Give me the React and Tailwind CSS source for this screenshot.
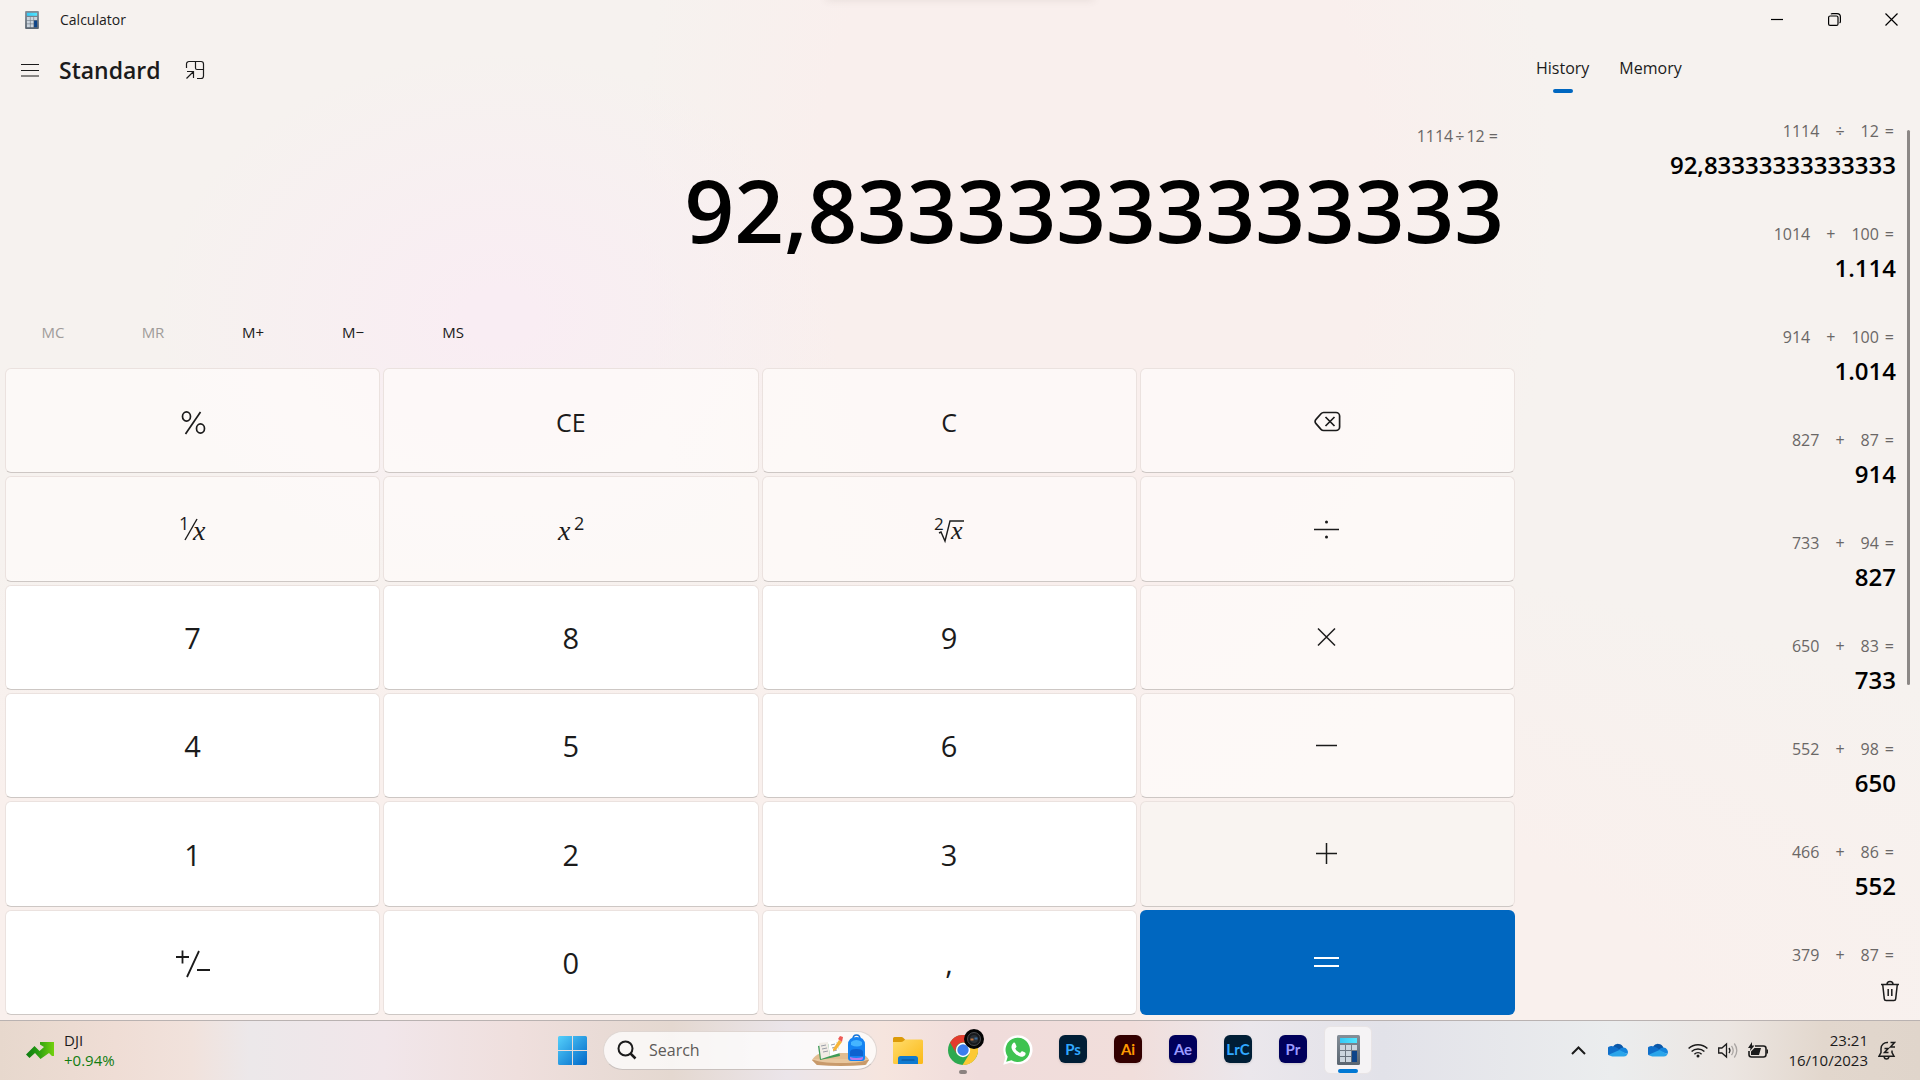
import React from "react";

const history = [
  ["1114", "÷", "12", "92,83333333333333"],
  ["1014", "+", "100", "1.114"],
  ["914", "+", "100", "1.014"],
  ["827", "+", "87", "914"],
  ["733", "+", "94", "827"],
  ["650", "+", "83", "733"],
  ["552", "+", "98", "650"],
  ["466", "+", "86", "552"],
  ["379", "+", "87", null],
];

/* ---------- key glyphs ---------- */

const glyph = { width: 32, height: 32, viewBox: "0 0 32 32", fill: "none", stroke: "currentColor", strokeWidth: 1.5, className: "overflow-visible", "aria-hidden": true };

const Percent = () => (
  <svg {...glyph} strokeWidth="1.7">
    <ellipse cx="9.500" cy="11.500" rx="4" ry="4.6" />
    <ellipse cx="23.500" cy="23.500" rx="4" ry="4.6" />
    <path d="M23.500 7 8.500 29" />
  </svg>
);
const Reciprocal = () => (
  <svg {...glyph}>
    <text x="2" y="17" fontSize="18" stroke="none" fill="currentColor" className="font-['Open_Sans',sans-serif]">1</text>
    <path d="M20 6 8 27" strokeWidth="1.4" />
    <text x="16" y="27" fontSize="28" fontStyle="italic" stroke="none" fill="currentColor" className="font-['Liberation_Serif',serif]">x</text>
  </svg>
);
const Square = () => (
  <svg {...glyph}>
    <text x="3" y="27" fontSize="28" fontStyle="italic" stroke="none" fill="currentColor" className="font-['Liberation_Serif',serif]">x</text>
    <text x="19" y="17" fontSize="18" stroke="none" fill="currentColor" className="font-['Open_Sans',sans-serif]">2</text>
  </svg>
);
const Root = () => (
  <svg {...glyph}>
    <text x="1" y="17" fontSize="17" stroke="none" fill="currentColor" className="font-['Open_Sans',sans-serif]">2</text>
    <path d="m6 20 2-1 4 9 5-20h14" strokeWidth="1.4" />
    <text x="18" y="26" fontSize="26" fontStyle="italic" stroke="none" fill="currentColor" className="font-['Liberation_Serif',serif]">x</text>
  </svg>
);
const Backspace = () => (
  <svg {...glyph} strokeWidth="1.7">
    <path d="M12.600 7.500h12.400a3.600 3.600 0 0 1 3.600 3.600v10.800a3.600 3.600 0 0 1-3.600 3.600H12.600a3.600 3.600 0 0 1-2.600-1.100L5 18.700a3 3 0 0 1 0-4.300l5-5.700a3.600 3.600 0 0 1 2.600-1.200Z" />
    <path d="m14.500 12 9 9m0-9-9 9" />
  </svg>
);
const Divide = () => (
  <svg {...glyph}>
    <path d="M3 16.500h25" />
    <circle cx="15.500" cy="9" r="1.500" fill="currentColor" stroke="none" />
    <circle cx="15.500" cy="24" r="1.500" fill="currentColor" stroke="none" />
  </svg>
);
const Times = () => <svg {...glyph}><path d="m7 7.500 17 17m0-17-17 17" /></svg>;
const Minus = () => <svg {...glyph}><path d="M5 15.500h21" /></svg>;
const Plus = () => <svg {...glyph}><path d="M5 15.500h21M15.500 5v21" /></svg>;
const Equals = () => <svg {...glyph} strokeWidth="2"><path d="M3 12h25M3 20h25" /></svg>;
const Negate = () => (
  <svg {...glyph} width="36" viewBox="0 0 36 32" strokeWidth="1.8">
    <path d="M1 10h13M7.500 3.500v13M24 4 12 30M22 23h13" />
  </svg>
);

const keys = [
  ["Percent", <Percent />, "op"],
  ["Clear entry", "CE", "fn"],
  ["Clear", "C", "fn"],
  ["Backspace", <Backspace />, "op"],
  ["Reciprocal", <Reciprocal />, "op"],
  ["Square", <Square />, "op"],
  ["Square root", <Root />, "op"],
  ["Divide by", <Divide />, "op"],
  ["Seven", "7", "num"],
  ["Eight", "8", "num"],
  ["Nine", "9", "num"],
  ["Multiply by", <Times />, "op"],
  ["Four", "4", "num"],
  ["Five", "5", "num"],
  ["Six", "6", "num"],
  ["Minus", <Minus />, "op"],
  ["One", "1", "num"],
  ["Two", "2", "num"],
  ["Three", "3", "num"],
  ["Plus", <Plus />, "plus"],
  ["Positive negative", <Negate />, "num"],
  ["Zero", "0", "num"],
  ["Decimal separator", ",", "num"],
  ["Equals", <Equals />, "eq"],
];

const keyStyle = {
  op: "border border-[#ebe2df] border-b-[#cdc7c4] bg-[#fffcfb]/70",
  fn: "border border-[#ebe2df] border-b-[#cdc7c4] bg-[#fffcfb]/70 pt-1 text-[25px]",
  plus: "border border-[#ebe2df] border-b-[#cdc7c4] bg-[#f9f4f1]",
  num: "border border-[#ebe2df] border-b-[#cdc7c4] bg-white pt-px text-[29px]",
  eq: "bg-[#0067c0] text-white",
};

/* ---------- window ---------- */

const CalcIcon = ({ className }) => (
  <svg className={className} viewBox="0 0 23 30" aria-hidden="true">
    <defs>
      <linearGradient id="calcBody" x1="0" y1="0" x2="0" y2="1">
        <stop stopColor="#848e98" />
        <stop offset="1" stopColor="#5a6570" />
      </linearGradient>
      <linearGradient id="calcScreen" x1="0" y1="0" x2="1" y2="0">
        <stop stopColor="#35c8f5" />
        <stop offset="1" stopColor="#50e6ff" />
      </linearGradient>
    </defs>
    <rect width="23" height="30" rx="1.500" fill="url(#calcBody)" />
    <rect x="3" y="3" width="17" height="5" fill="url(#calcScreen)" />
    <g fill="#cbd5de">
      <rect x="3" y="10" width="5" height="5" />
      <rect x="9" y="10" width="5" height="5" />
      <rect x="15" y="10" width="5" height="5" />
      <rect x="3" y="16" width="5" height="5" />
      <rect x="9" y="16" width="5" height="5" />
      <rect x="3" y="22" width="5" height="5" />
      <rect x="9" y="22" width="5" height="5" />
    </g>
    <rect x="15" y="16" width="5" height="11" fill="#0d4489" />
  </svg>
);

function TitleBar() {
  return (
    <header className="flex h-10 shrink-0 items-center justify-between">
      <div className="flex items-center pl-6">
        <CalcIcon className="h-[18px] w-4" />
        <h1 className="pl-5 text-sm text-[#1b1b1b]">Calculator</h1>
      </div>
      <div className="flex h-[38px] self-start pr-px text-black">
        <button aria-label="Minimize" className="flex w-14 items-center justify-center">
          <svg width="12" height="12" stroke="currentColor"><path d="M0 6.500h12" strokeWidth="1.200" /></svg>
        </button>
        <button aria-label="Restore" className="flex w-[58px] items-center justify-center">
          <svg width="13" height="13" fill="none" stroke="currentColor" strokeWidth="1.200">
            <rect x=".6" y="3" width="9.400" height="9.400" rx="1.500" />
            <path d="M3 1.300Q3.400.6 4.500.6H9a3.400 3.400 0 0 1 3.400 3.400v4.500q0 1-.8 1.500" />
          </svg>
        </button>
        <button aria-label="Close" className="flex w-14 items-center justify-center">
          <svg width="13" height="13" stroke="currentColor" strokeWidth="1.200"><path d="m.5.500 12 12m0-12-12 12" /></svg>
        </button>
      </div>
    </header>
  );
}

function Keypad() {
  return (
    <section className="flex min-w-0 flex-1 flex-col">
      <div className="flex h-[60px] items-center pl-5 text-[#1b1b1b]">
        <button aria-label="Open navigation">
          <svg width="20" height="14" stroke="currentColor" strokeWidth="1.200"><path d="M1 1.500h18M1 7.500h18M1 13h18" /></svg>
        </button>
        <h2 className="pl-[19px] text-[23px] font-semibold">Standard</h2>
        <button aria-label="Keep on top" className="ml-6">
          <svg width="20" height="20" fill="none" stroke="currentColor" strokeWidth="1.200">
            <path d="M1.500 8V4a2.500 2.500 0 0 1 2.500-2.500h12A2.500 2.500 0 0 1 18.500 4v12a2.500 2.500 0 0 1-2.500 2.500h-4M10.500 1.500V8a1.500 1.500 0 0 0 1.500 1.500h6.500M1.500 18.500 8.500 11.500M2 11.500h6.500V18" />
          </svg>
        </button>
      </div>
      <div className="flex justify-end gap-[2px] pt-6 pr-[17px] leading-6 text-[#6a6766]">
        <span>1114</span>
        <span>÷</span>
        <span>12 =</span>
      </div>
      <output className="block h-[156px] pr-[11px] text-right text-[87px] leading-[122px] font-semibold text-black">92,83333333333333</output>
      <div className="flex h-14 items-center pl-[3px] text-[15px] text-[#1b1b1b]">
        <button disabled className="w-[100px] text-[#a09c9a]">MC</button>
        <button disabled className="w-[100px] text-[#a09c9a]">MR</button>
        <button className="w-[100px]">M+</button>
        <button className="w-[100px]">M−</button>
        <button className="w-[100px]">MS</button>
      </div>
      <div className="mt-2 mb-[5px] ml-[5px] grid flex-1 auto-rows-fr grid-cols-4 gap-[3px]">
        {keys.map(([label, face, kind]) => (
          <button key={label} aria-label={label} className={`flex items-center justify-center rounded-md text-[#1b1b1b] ${keyStyle[kind]}`}>
            {face}
          </button>
        ))}
      </div>
    </section>
  );
}

function HistoryPane() {
  return (
    <aside className="flex w-[405px] shrink-0 flex-col pl-[5px]">
      <div role="tablist" className="flex h-[60px] gap-[30px] pt-4 pl-4 leading-6 text-[#1b1b1b]">
        <button role="tab" aria-selected="true" className="flex flex-col items-center gap-[9px]">
          History
          <span className="h-1 w-5 rounded-full bg-[#0067c0]" />
        </button>
        <button role="tab" aria-selected="false" className="self-start">Memory</button>
      </div>
      <div className="flex min-h-0 flex-1 pt-[19px]">
        <ul className="h-0 min-h-full flex-1 overflow-hidden">
          {history.map(([a, op, b, result]) => (
            <li key={a} className="text-right">
              <div className="flex justify-end pr-[10px] leading-6 text-[#6a6766]">
                <span>{a}</span>
                <span className="px-4">{op}</span>
                <span>{b}</span>
                <span className="pl-[6px]">=</span>
              </div>
              {result && <div className="pt-[6px] pr-2 pb-[41px] text-2xl leading-8 font-semibold text-black">{result}</div>}
            </li>
          ))}
        </ul>
        <div className="mt-[11px] mr-[10px] ml-[3px] h-[555px] w-[3px] rounded-full bg-[#8c8886]" />
      </div>
      <div className="flex h-[58px] items-center justify-end pr-5">
        <button aria-label="Clear all history">
          <svg width="20" height="22" fill="none" stroke="#1b1b1b" strokeWidth="1.500">
            <path d="M1 4.500h18M7 4.500a3 3 0 0 1 6 0M2.700 4.500l1.600 14.300a1.800 1.800 0 0 0 1.800 1.600h7.800a1.800 1.800 0 0 0 1.800-1.600l1.600-14.300M8.200 9v7M11.800 9v7" />
          </svg>
        </button>
      </div>
    </aside>
  );
}

/* ---------- taskbar ---------- */

const adobe = [
  ["Ps", "bg-[#001e36] text-[#31a8ff]"],
  ["Ai", "bg-[#330000] text-[#ff9a00]"],
  ["Ae", "bg-[#00005b] text-[#9999ff]"],
  ["LrC", "bg-[#001e36] text-[#31a8ff]"],
  ["Pr", "bg-[#00005b] text-[#9999ff]"],
];

const WinLogo = () => (
  <svg width="29" height="29" viewBox="0 0 29 29" aria-hidden="true">
    <defs>
      <linearGradient id="win" gradientUnits="userSpaceOnUse" x1="0" y1="0" x2="29" y2="29">
        <stop stopColor="#55d0fb" />
        <stop offset="1" stopColor="#0067c8" />
      </linearGradient>
    </defs>
    <path fill="url(#win)" d="M1.500 0H14v14H0V1.500A1.500 1.500 0 0 1 1.500 0ZM15 0h12.500A1.500 1.500 0 0 1 29 1.500V14H15ZM0 15h14v14H1.500A1.500 1.500 0 0 1 0 27.500ZM15 15h14v12.500a1.500 1.500 0 0 1-1.500 1.500H15Z" />
  </svg>
);

const SchoolArt = () => (
  <svg width="57" height="32" viewBox="0 0 57 32" aria-hidden="true">
    <path d="M0 26q3-5 9-7h40q6 3 8 7l-3 5H5Z" fill="#e2bd91" />
    <path d="M0 26h57l-4 5q-24 2-48 0Z" fill="#c89a6b" />
    <path d="M0 25h57q-6 4-28 4T0 25Z" fill="#e8c79e" />
    <path d="m6 12 19-4 3 14-20 4Z" fill="#3f9b57" />
    <path d="m7 9 9-1 2 14-9 3Z" fill="#f1ece6" />
    <path d="m16 8 8-2 4 13-10 3Z" fill="#fff" />
    <path d="m9 12 5-1m-4 4 5-1m-4 4 5-1m3-6 4-1m-3 4 4-1m-3 4 4-1" stroke="#9a9ea8" />
    <path d="m21 15 6-9 3 2-6 8-3 1Z" fill="#f7b53a" />
    <path d="m26 5 2-3 3 1-1 5Z" fill="#ee5a55" />
    <path d="M41 5q0-4 3.500-4T48 5" fill="none" stroke="#1473d8" strokeWidth="1.500" />
    <path d="M36 11q0-8 8.500-8T53 11v13q0 3-3 3H39q-3 0-3-3Z" fill="#1583f2" />
    <path d="M39 8q5-4 11 0v3q-5 3-11 0Z" fill="#45b5ff" />
    <path d="M38 18q0-3 6.500-3t6.500 3v4H38Z" fill="#0d62cf" />
    <path d="M38 23q6 2 13 0v1q0 2-2 2h-9q-2 0-2-2Z" fill="#b779ee" />
  </svg>
);

const Folder = () => (
  <svg width="30" height="27" viewBox="0 0 30 27" aria-hidden="true">
    <defs>
      <linearGradient id="fold" x1="0" y1="0" x2="1" y2="1">
        <stop stopColor="#ffdc6c" />
        <stop offset="1" stopColor="#fbb916" />
      </linearGradient>
    </defs>
    <path d="M0 1.500A1.500 1.500 0 0 1 1.500 0h7q1 0 1.700.7L13 3.500 10 7H0Z" fill="#dc9a08" />
    <path d="M0 5h8q1.500 0 2.500-1l.8-.8q.7-.7 1.700-.7h15.500A1.500 1.500 0 0 1 30 4v21.500a1.500 1.500 0 0 1-1.500 1.500h-27A1.500 1.500 0 0 1 0 25.500Z" fill="url(#fold)" />
    <path d="M5 27v-5.500A2.500 2.500 0 0 1 7.500 19h15a2.500 2.500 0 0 1 2.500 2.500V27Z" fill="#0f7ad0" />
    <path d="M9 23h12" stroke="#0a4f90" strokeWidth="1.200" strokeLinecap="round" />
  </svg>
);

const Chrome = () => (
  <svg width="30" height="30" viewBox="0 0 30 30" aria-hidden="true">
    <circle cx="15" cy="15" r="15" fill="#2da94f" />
    <path d="M15 7.500h13A15 15 0 0 1 14.500 30l7-11.200Z" fill="#fcc934" />
    <path d="M2 7.500A15 15 0 0 1 28 7.500H15a7.500 7.500 0 0 0-6.500 11.200Z" fill="#e33b2e" />
    <circle cx="15" cy="15" r="7.200" fill="#fff" />
    <circle cx="15" cy="15" r="5.700" fill="#3b7ded" />
  </svg>
);

const Lens = () => (
  <svg width="20" height="20" viewBox="0 0 20 20" aria-hidden="true">
    <circle cx="10" cy="10" r="10" fill="#050505" />
    <circle cx="10" cy="10" r="6.500" fill="#17191c" stroke="#5a5d60" strokeWidth=".8" />
    <circle cx="10" cy="10" r="4" fill="#2a3036" />
    <path d="M6.500 9.500h3v2h-3Z" fill="#c6763e" />
    <path d="M10.500 8.500h3v2h-3Z" fill="#3c6da0" />
  </svg>
);

const WhatsApp = () => (
  <svg width="30" height="30" viewBox="0 0 30 30" aria-hidden="true">
    <path d="M.3 29.700 2.400 22.200A14.600 14.600 0 1 1 8 27.600Z" fill="#fff" />
    <path d="m3.200 26.800 1.500-5A12.200 12.200 0 1 1 8.400 25.300Z" fill="#3fc351" />
    <path d="M10.300 8c.5-.5 1.500-.6 1.900.2l1.200 2.800c.3.700-.1 1.200-1.200 2.500 1.100 2.200 2.600 3.500 4.900 4.500 1.300-1.600 1.600-2 2.300-1.700l2.700 1.300c.7.400.6 1.500.1 2.400-.8 1.400-2.900 2-4.300 1.700-4.300-.8-8.900-5.300-9.400-9.200-.2-1.600.7-3.500 1.800-4.500Z" fill="#fff" />
  </svg>
);

const Cloud = () => (
  <svg width="20" height="14" viewBox="0 0 20 14" aria-hidden="true">
    <path d="M5 3.500A6 6 0 0 1 15.500 4.500L11 8Z" fill="#0a57a8" />
    <path d="M4.500 3.300q2.500 0 4.500 1.500L15 9 2 12.500A4.700 4.700 0 0 1 4.500 3.300Z" fill="#0f6fca" />
    <path d="M15.500 4.500A4.600 4.600 0 0 1 19.500 11L12 8.500l-1-2q2-2 4.500-2Z" fill="#1484dc" />
    <path d="M1.200 11.500 11.500 7l8 4.200A4 4 0 0 1 16 13.500H4.500q-2 0-3.300-2Z" fill="#2aa5ea" />
  </svg>
);

function Slot({ label, children, className = "" }) {
  return (
    <button aria-label={label} className={`relative flex size-12 items-center justify-center rounded-md ${className}`}>
      {children}
    </button>
  );
}

function Taskbar() {
  return (
    <footer className="grid h-[60px] shrink-0 grid-cols-[1fr_auto_1fr] items-center border-t border-[#b9b2b1] bg-[linear-gradient(90deg,#e7d8cd_0%,#efddd5_6%,#f1e2dc_10%,#ece8ea_13%,#f1e6ea_20%,#efdfdd_27%,#e4d8d0_35%,#ebe5ea_41%,#f6e5de_46%,#f0dcdb_51%,#f1dedb_59%,#ebe7ec_65%,#e2e2e9_72%,#ebedee_84%,#ece6e2_90%,#e2d7cd_95%,#e0d5cb_100%)] pb-px text-[#1b1b1b]">
      <button className="flex items-center gap-[10px] justify-self-start pl-[26px] text-left text-[15px] leading-5">
        <svg width="28" height="17" viewBox="0 0 28 17" aria-hidden="true">
          <defs>
            <linearGradient id="trend" x1="0" y1="0" x2="1" y2="0">
              <stop stopColor="#0d7a12" />
              <stop offset=".4" stopColor="#259a12" />
              <stop offset="1" stopColor="#74d10e" />
            </linearGradient>
          </defs>
          <path d="m0 12.500 8.500-8.500 5 5 4.500-4L14 2.500V0h14v14h-2l-3-3-8.500 6L9 11l-5.500 5Z" fill="url(#trend)" />
        </svg>
        <span>
          <span className="block">DJI</span>
          <span className="block text-[#107c10]">+0.94%</span>
        </span>
      </button>

      <nav className="flex items-center gap-[7px]" aria-label="Taskbar">
        <Slot label="Start"><WinLogo /></Slot>
        <label className="flex h-[39px] w-[274px] items-center rounded-full border border-[#dfd6d2] border-b-[#c9c1be] bg-white/75 pr-[7px] pl-[13px]">
          <svg width="20" height="20" fill="none" stroke="#1b1b1b" strokeWidth="2" aria-hidden="true">
            <circle cx="8.500" cy="8.500" r="7" />
            <path d="m13.500 13.500 5 5" strokeWidth="2.500" />
          </svg>
          <input aria-label="Search" placeholder="Search" className="ml-3 w-0 flex-1 bg-transparent outline-none placeholder:text-[#5d5a58]" />
          <SchoolArt />
        </label>
        <Slot label="File Explorer"><Folder /></Slot>
        <Slot label="Google Chrome">
          <Chrome />
          <span className="absolute top-[3px] right-[3px]"><Lens /></span>
          <span className="absolute bottom-0 h-1 w-2 rounded-full bg-[#8b8280]" />
        </Slot>
        <Slot label="WhatsApp"><WhatsApp /></Slot>
        {adobe.map(([name, color]) => (
          <Slot key={name} label={name}>
            <span className={`mb-[2px] flex size-7 items-center justify-center rounded-md font-['Lato',sans-serif] text-[15px] leading-none font-bold shadow-sm ${color}`}>{name}</span>
          </Slot>
        ))}
        <Slot label="Calculator" className="border border-[#e8e4e6] bg-[#f5f3f5]">
          <CalcIcon className="h-[30px] w-[23px]" />
          <span className="absolute bottom-0 h-1 w-5 rounded-full bg-[#0078d4]" />
        </Slot>
      </nav>

      <div className="flex items-center justify-self-end pr-6">
        <button aria-label="Show hidden icons" className="mr-[22px]">
          <svg width="15" height="9" fill="none" stroke="currentColor" strokeWidth="2"><path d="m1 8 6.500-6.500L14 8" /></svg>
        </button>
        <button aria-label="OneDrive personal" className="mr-5"><Cloud /></button>
        <button aria-label="OneDrive work" className="mr-5"><Cloud /></button>
        <button aria-label="Network, volume and battery" className="flex items-center gap-[10px]">
          <svg width="20" height="15" fill="none" stroke="currentColor" strokeWidth="1.500">
            <path d="M.6 5.500a13.500 13.500 0 0 1 18.800 0M3.600 8.500a9.200 9.200 0 0 1 12.800 0M6.400 11.300a5.200 5.200 0 0 1 7.200 0" />
            <circle cx="10" cy="13" r="1.500" fill="currentColor" stroke="none" />
          </svg>
          <svg width="20" height="17" fill="none" stroke="currentColor" strokeWidth="1.300">
            <path d="M.7 6v5h3.200L8.500 15V2L3.900 6ZM11 6q1.800 2.500 0 5" />
            <path d="M13.500 3.800q3.400 4.700 0 9.400M16.300 1.500q5 7 0 14" stroke="#aaa5a3" />
          </svg>
          <svg width="20" height="17" fill="none" stroke="currentColor" strokeWidth="1.600">
            <path d="M7 4h8.500A2.500 2.500 0 0 1 18 6.500v6a2.500 2.500 0 0 1-2.500 2.500h-12A2.500 2.500 0 0 1 1 12.500V9" />
            <path d="M3 13V9.500L6.500 6H13l-2 7ZM4 0 0 6h2.500L2 9l4.500-5.500H4ZM18.500 7.500h1.500v4h-1.500Z" fill="currentColor" stroke="none" />
          </svg>
        </button>
        <button className="ml-5 text-right text-[15px] leading-5">
          <span className="block">23:21</span>
          <span className="block">16/10/2023</span>
        </button>
        <button aria-label="Notifications" className="ml-[10px]">
          <svg width="18" height="19" fill="none" stroke="currentColor" strokeWidth="1.500">
            <path d="M10 1.500A6.200 6.200 0 0 0 3 7.700v3.800L1 15.200h15l-2-3.700V9.500M6 16q.6 2 2.500 2t2.500-2" />
            <path d="M6.500 7.500h3.700l-3.700 4h4M12.500 1.500h4l-4 4.500h4.500" />
          </svg>
        </button>
      </div>
    </footer>
  );
}

export default function App() {
  return (
    <div className="flex h-screen flex-col overflow-hidden bg-[#f6f2ef] font-['Open_Sans','Noto_Sans',sans-serif]">
      <div className="relative flex min-h-0 flex-1 flex-col bg-[radial-gradient(ellipse_18%_26%_at_26%_31%,#f9edf3_10%,#f9edf300_100%),radial-gradient(ellipse_24%_65%_at_57%_20%,#f9efed_60%,#f9efed00_100%),radial-gradient(ellipse_85%_50%_at_36%_100%,#f9f0ed_60%,#f9f0ed00_100%)]">
        <div className="absolute -top-2 left-[43%] h-2 w-[14%] shadow-[0_0_8px_rgba(90,80,75,0.12)]" />
        <TitleBar />
        <main className="flex min-h-0 flex-1">
          <Keypad />
          <HistoryPane />
        </main>
      </div>
      <Taskbar />
    </div>
  );
}
